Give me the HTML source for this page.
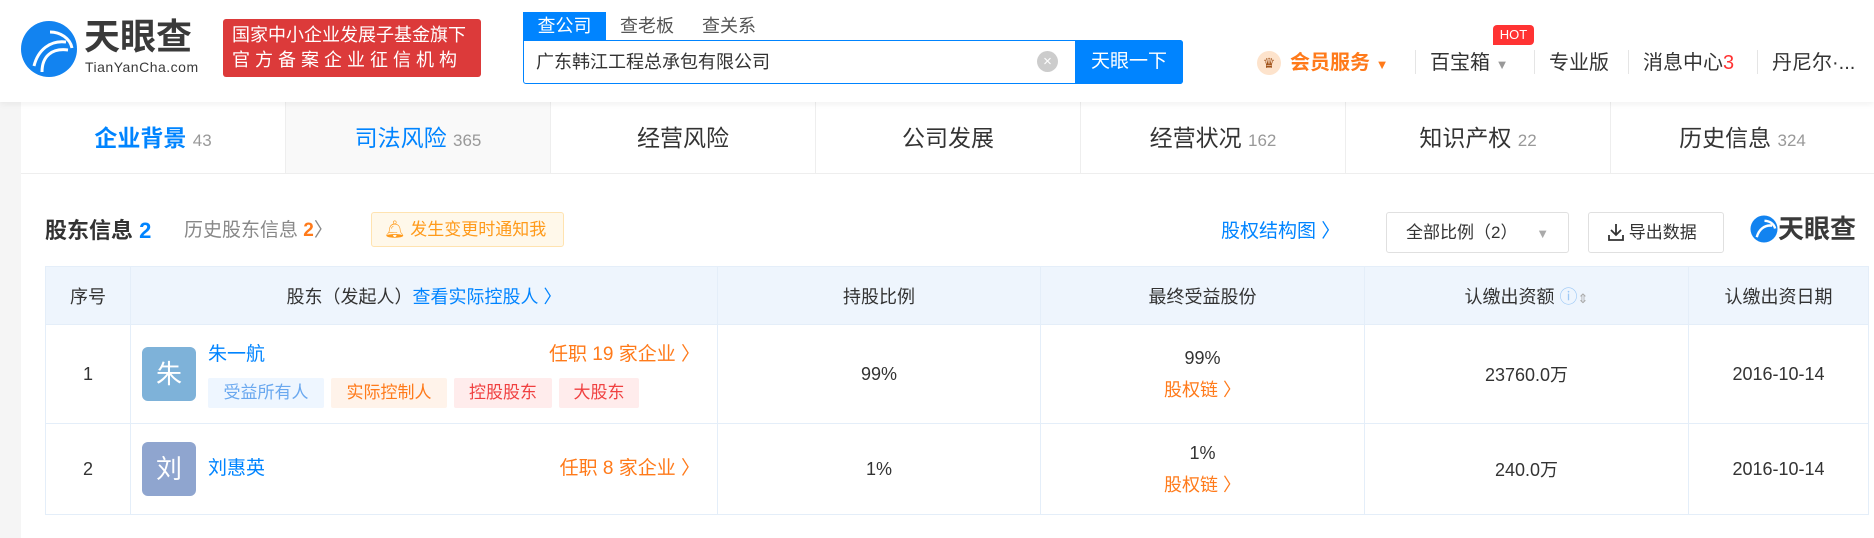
<!DOCTYPE html>
<html><head><meta charset="utf-8"><style>
*{margin:0;padding:0;box-sizing:border-box}
body{width:1874px;height:538px;overflow:hidden;background:#f5f5f5;font-family:"Liberation Sans","Noto Sans CJK SC",sans-serif;color:#333;position:relative}
.a{position:absolute;white-space:nowrap}
.hdr{position:absolute;left:0;top:0;width:1874px;height:102px;background:#fff;box-shadow:0 2px 6px rgba(0,0,0,.06);z-index:2}
.card{position:absolute;left:21px;top:102px;width:1853px;height:436px;background:#fff}
.tab{position:absolute;top:102px;height:72px;width:265px;border-right:1px solid #eee;border-bottom:1px solid #eee;text-align:center;line-height:72px;font-size:23px;color:#333;background:#fff}
.tab small{font-size:17px;color:#999}
.blue{color:#0084ff}.org{color:#ff7a1a}
table{position:absolute;left:45px;top:266px;width:1824px;border-collapse:collapse;font-size:18px}
td,th{border:1px solid #e4eef9;text-align:center;font-weight:normal}
th{background:#eef5fd;height:58px;color:#333}
.tag{display:inline-block;height:30px;line-height:30px;font-size:17px;margin-right:7px;border-radius:2px;text-align:center}
.av{position:absolute;width:54px;height:54px;border-radius:6px;color:#fff;font-size:26px;text-align:center;line-height:54px}
.sep{position:absolute;top:50px;width:1px;height:24px;background:#e5e5e5}
</style></head><body>
<div class="hdr">
<svg class="a" style="left:20px;top:20px" width="58" height="58" viewBox="0 0 58 58"><circle cx="29" cy="29" r="28" fill="#1283f0"/><path d="M14 46 C18 30 30 20 46 22" stroke="#fff" stroke-width="3" fill="none"/><path d="M22 52 C22 36 32 28 48 30" stroke="#fff" stroke-width="3" fill="none"/><path d="M30 12 C40 12 50 18 52 28" stroke="#fff" stroke-width="3" fill="none"/></svg>
<div class="a" style="left:84px;top:17px;font-size:36px;line-height:40px;font-weight:bold;color:#3a3a3a">天眼查</div>
<div class="a" style="left:85px;top:59px;font-size:14px;line-height:16px;color:#3a3a3a;letter-spacing:.5px">TianYanCha.com</div>
<div class="a" style="left:223px;top:19px;width:258px;height:58px;background:#dc3a3a;border-radius:3px;color:#fff;font-size:18px;line-height:25px;padding:4px 0 0 9px">国家中小企业发展子基金旗下<br><span style="letter-spacing:5px">官方备案企业征信机构</span></div>
<div class="a" style="left:523px;top:12px;width:83px;height:29px;background:#0084ff;color:#fff;font-size:18px;text-align:center;line-height:29px">查公司</div>
<div class="a" style="left:620px;top:12px;font-size:18px;line-height:29px;color:#555">查老板</div>
<div class="a" style="left:702px;top:12px;font-size:18px;line-height:29px;color:#555">查关系</div>
<div class="a" style="left:523px;top:40px;width:660px;height:44px;border:1px solid #0084ff;border-radius:0 3px 3px 3px"></div>
<div class="a" style="left:536px;top:40px;line-height:44px;font-size:18px;color:#333">广东韩江工程总承包有限公司</div>
<div class="a" style="left:1037px;top:51px;width:21px;height:21px;border-radius:50%;background:#ccc;color:#fff;font-size:15px;text-align:center;line-height:21px">×</div>
<div class="a" style="left:1075px;top:40px;width:108px;height:44px;background:#0084ff;color:#fff;font-size:19px;text-align:center;line-height:44px;border-radius:0 3px 3px 0">天眼一下</div>
<div class="a" style="left:1257px;top:51px;width:24px;height:24px;border-radius:50%;background:#fde3cc;color:#a0521a;font-size:14px;text-align:center;line-height:24px">♛</div>
<div class="a" style="left:1290px;top:48px;font-size:20px;font-weight:bold;color:#ff7a1a;line-height:30px">会员服务 <span style="font-size:13px">▼</span></div>
<div class="sep" style="left:1415px"></div>
<div class="a" style="left:1430px;top:48px;font-size:20px;line-height:30px">百宝箱 <span style="font-size:13px;color:#999">▼</span></div>
<div class="a" style="left:1493px;top:25px;width:41px;height:20px;background:#f33;color:#fff;font-size:13px;text-align:center;line-height:20px;border-radius:4px 4px 4px 0">HOT</div>
<div class="sep" style="left:1534px"></div>
<div class="a" style="left:1549px;top:48px;font-size:20px;line-height:30px">专业版</div>
<div class="sep" style="left:1628px"></div>
<div class="a" style="left:1643px;top:48px;font-size:20px;line-height:30px">消息中心<span style="color:#f33">3</span></div>
<div class="sep" style="left:1757px"></div>
<div class="a" style="left:1772px;top:48px;font-size:20px;line-height:30px">丹尼尔·...</div>
</div>
<div class="card"></div>
<div class="tab" style="left:21px"><b class="blue">企业背景</b> <small class="blue">43</small></div>
<div class="tab" style="left:286px;background:#f9f9f9"><span class="blue">司法风险</span> <small class="blue">365</small></div>
<div class="tab" style="left:551px">经营风险</div>
<div class="tab" style="left:816px">公司发展</div>
<div class="tab" style="left:1081px">经营状况 <small>162</small></div>
<div class="tab" style="left:1346px">知识产权 <small>22</small></div>
<div class="tab" style="left:1611px;width:263px;border-right:0">历史信息 <small>324</small></div>

<div class="a" style="left:45px;top:216px;font-size:22px;font-weight:bold;line-height:30px">股东信息 <span class="blue">2</span></div>
<div class="a" style="left:184px;top:216px;font-size:19px;color:#888;line-height:30px">历史股东信息 <b class="org">2</b>〉</div>
<div class="a" style="left:371px;top:212px;width:193px;height:35px;background:#fff8ea;border:1px solid #ffe3b0;border-radius:3px;color:#ff9a1a;font-size:17px;line-height:33px;padding-left:12px">🔔︎ 发生变更时通知我</div>
<div class="a" style="left:1221px;top:217px;font-size:19px;line-height:30px"><span class="blue">股权结构图 〉</span></div>
<div class="a" style="left:1386px;top:212px;width:183px;height:41px;border:1px solid #e0e0e0;border-radius:3px;font-size:17px;line-height:39px;padding-left:19px">全部比例（2） <span style="color:#aaa;font-size:13px;margin-left:14px">▼</span></div>
<div class="a" style="left:1588px;top:212px;width:136px;height:41px;border:1px solid #e0e0e0;border-radius:3px;font-size:17px;line-height:39px;padding-left:19px"><svg width="16" height="18" viewBox="0 0 16 18" style="vertical-align:-3px"><path d="M8 1v11M3 7l5 5 5-5M1 12v5h14v-5" stroke="#333" stroke-width="1.8" fill="none"/></svg> 导出数据</div>
<svg class="a" style="left:1750px;top:215px" width="28" height="28" viewBox="0 0 58 58"><circle cx="29" cy="29" r="28" fill="#1283f0"/><path d="M14 46 C18 30 30 20 46 22" stroke="#fff" stroke-width="5" fill="none"/><path d="M30 12 C40 12 50 18 52 28" stroke="#fff" stroke-width="5" fill="none"/></svg>
<div class="a" style="left:1778px;top:212px;font-size:26px;font-weight:bold;color:#3a3a3a;line-height:34px">天眼查</div>

<table>
<tr><th style="width:85px">序号</th><th style="width:587px">股东（发起人）<span class="blue">查看实际控股人 〉</span></th><th style="width:323px">持股比例</th><th style="width:324px">最终受益股份</th><th style="width:324px">认缴出资额 <span style="color:#9cc8f5">ⓘ</span><span style="color:#aaa;font-size:13px">⇕</span></th><th>认缴出资日期</th></tr>
<tr style="height:99px"><td>1</td><td></td><td>99%</td><td style="line-height:32px">99%<br><span class="org">股权链 〉</span></td><td>23760.0万</td><td>2016-10-14</td></tr>
<tr style="height:91px"><td>2</td><td></td><td>1%</td><td style="line-height:32px">1%<br><span class="org">股权链 〉</span></td><td>240.0万</td><td>2016-10-14</td></tr>
</table>
<div class="av" style="left:142px;top:347px;background:#7eb2d9">朱</div>
<div class="a blue" style="left:208px;top:342px;font-size:19px;line-height:26px">朱一航</div>
<div class="a org" style="right:1174px;top:342px;font-size:19px;line-height:26px">任职 19 家企业 〉</div>
<div class="a" style="left:208px;top:378px">
<span class="tag" style="width:116px;background:#eef6ff;color:#6aa8ef">受益所有人</span><span class="tag" style="width:116px;background:#fff3ea;color:#ff7a1a">实际控制人</span><span class="tag" style="width:98px;background:#ffecec;color:#f04040">控股股东</span><span class="tag" style="width:80px;background:#ffecec;color:#f04040">大股东</span></div>
<div class="av" style="left:142px;top:442px;background:#8fa5cf">刘</div>
<div class="a blue" style="left:208px;top:456px;font-size:19px;line-height:26px">刘惠英</div>
<div class="a org" style="right:1174px;top:456px;font-size:19px;line-height:26px">任职 8 家企业 〉</div>
</body></html>
